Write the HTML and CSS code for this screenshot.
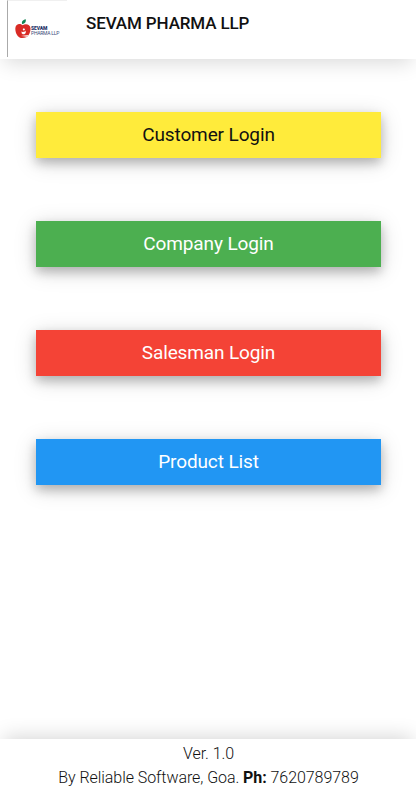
FILE: index.html
```html
<!DOCTYPE html>
<html lang="en">
<head>
<meta charset="utf-8">
<title>Sevam Pharma LLP</title>
<link rel="stylesheet" href="styles.css">
</head>
<body>
<header class="header">
  <div class="logo">
    <svg class="apple" viewBox="0 0 16 20" aria-hidden="true">
      <path class="leaf" d="M7.200 5.200C6.200 2.800 7.600 1 10.800.3 11.300 3 10 4.800 7.200 5.200Z"/>
      <path class="fruit" d="M7.500 6.300C5.500 4.300 1 4.300.4 8.800-.2 13.500 2.800 18.700 6.200 19 8 19.100 10 18.900 11.800 18 14.200 16 15.800 12.500 15.500 9.200 15.200 5.200 10.500 4.200 7.500 6.300Z"/>
      <path class="figure" d="M8.800 11.600a1 1 0 1 1 .1 0ZM6.600 12.200Q7.300 13.300 8.500 12.700 9.800 13 10.700 11.500 11.400 14.300 9.400 15.200L7.800 15.300Q6 14.500 6.600 12.200ZM5.800 17Q9.500 16.300 13.800 16L11.600 17.700Q8.500 17.200 5.800 17Z"/>
    </svg>
    <div class="brand"><b>SEVAM</b><span>PHARMA LLP</span></div>
  </div>
  <h1 class="title">SEVAM PHARMA LLP</h1>
</header>
<main class="menu">
  <button class="btn yellow">Customer Login</button>
  <button class="btn green">Company Login</button>
  <button class="btn red">Salesman Login</button>
  <button class="btn blue">Product List</button>
</main>
<footer class="footer">
  <div>Ver. 1.0</div>
  <div class="credit">By Reliable Software, Goa. <b>Ph:</b> 7620789789</div>
</footer>
</body>
</html>
```
FILE: styles.css
```css
* { box-sizing: border-box; }
body {
  margin: 0;
  height: 800px;
  display: flex;
  flex-direction: column;
  overflow: hidden;
  background: #fff;
  color: #111;
  font-family: Roboto, sans-serif;
}
.header {
  height: 59px;
  flex: none;
  display: flex;
  align-items: flex-start;
  padding-left: 7px;
  background: #fff;
  box-shadow: 0 8px 20px -4px rgba(0, 0, 0, .15);
}
.logo {
  width: 60px;
  height: 57px;
  padding: 18px 0 0 7px;
  display: flex;
  border-left: 1px solid #aaa;
  border-top: 1px solid #f0f0f0;
}
.apple { width: 16px; height: 20px; flex: none; }
.leaf { fill: #138553; }
.fruit { fill: #d92b25; }
.figure { fill: #fff; }
.brand {
  padding-top: 7px;
  font-size: 5px;
  line-height: 4.500px;
  letter-spacing: -.25px;
  color: #3c4d7c;
  white-space: nowrap;
}
.brand b, .brand span { display: block; }
.brand b { font-weight: 900; color: #1d3468; letter-spacing: -.1px; }
.title {
  margin: 13px 0 0 19px;
  font-size: 17px;
  line-height: 20px;
  letter-spacing: -.13px;
  font-weight: 500;
  white-space: nowrap;
}
.menu {
  flex: 1;
  display: flex;
  flex-direction: column;
  gap: 62.500px;
  padding: 52.500px 35px 0 36px;
}
.btn {
  height: 46.500px;
  flex: none;
  padding: 0;
  border: 0;
  color: #fff;
  font: 400 19px/46px Roboto, sans-serif;
  letter-spacing: -.12px;
  box-shadow: 0 5px 10px rgba(0, 0, 0, .22), 0 4px 22px rgba(0, 0, 0, .17);
}
.yellow { background: #ffeb3b; color: #111; }
.green { background: #4caf50; }
.red { background: #f44336; }
.blue { background: #2196f3; }
.footer {
  height: 61px;
  flex: none;
  padding: 3px 0 0 1px;
  text-align: center;
  font-size: 16px;
  line-height: 24px;
  letter-spacing: -.06px;
  font-weight: 350;
  background: #fff;
  box-shadow: 0 -6px 20px -4px rgba(0, 0, 0, .17);
}
.footer b { font-weight: 700; }
```
